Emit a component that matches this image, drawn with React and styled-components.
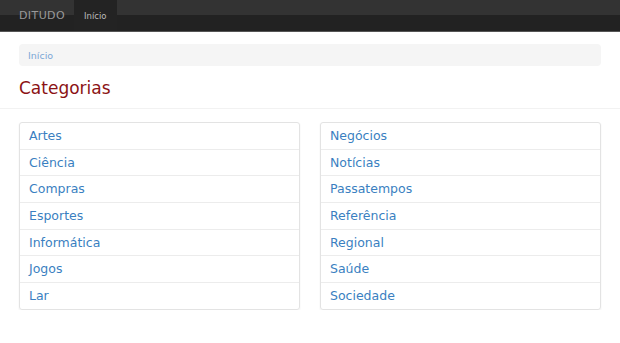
import React from "react";
import styled, { createGlobalStyle } from "styled-components";

const GlobalStyle = createGlobalStyle`
  body {
    margin: 0;
    background: #fff;
    font-family: "DejaVu Sans", Verdana, sans-serif;
  }
  * { box-sizing: border-box; }
`;

const left = ["Artes", "Ciência", "Compras", "Esportes", "Informática", "Jogos", "Lar"];
const right = ["Negócios", "Notícias", "Passatempos", "Referência", "Regional", "Saúde", "Sociedade"];

const Navbar = styled.div`
  height: 32px;
  display: flex;
  align-items: stretch;
  padding: 0 19px;
  background: linear-gradient(to bottom, #333 0%, #333 48%, #222 48%, #222 100%);
  border-bottom: 1px solid #555;
`;

const Brand = styled.div`
  display: flex;
  align-items: center;
  padding-right: 9px;
  color: #999;
  font-size: 11px;
  letter-spacing: 0.4px;
`;

const Tab = styled.div`
  display: flex;
  align-items: center;
  padding: 0 10px;
  background: ${(p) => (p.$active ? "#232323" : "transparent")};
  color: #bbb;
  font-size: 8.5px;
`;

const Container = styled.div`
  padding: 12px 19px 0;
`;

const Breadcrumb = styled.div`
  height: 22px;
  display: flex;
  align-items: center;
  padding: 0 9px;
  background: #f5f5f5;
  border-radius: 4px;
  font-size: 9.5px;
  color: #7ba7d6;
`;

const Title = styled.h1`
  margin: 10px 0 0;
  font-weight: normal;
  font-size: 17px;
  line-height: 24px;
  color: #8b1214;
`;

const Rule = styled.hr`
  margin: 8px 0 0;
  border: 0;
  border-top: 1px solid #f2f2f2;
`;

const Columns = styled.div`
  display: grid;
  grid-template-columns: 1fr 1fr;
  gap: 20px;
  padding: 13px 19px 0;
`;

const List = styled.ul`
  list-style: none;
  margin: 0;
  padding: 0;
  border: 1px solid #e3e3e3;
  border-radius: 3px;
  box-shadow: 0 1px 2px rgba(0, 0, 0, 0.07);
`;

const Item = styled.li`
  padding: 5px 9px;
  line-height: 15.67px;
  font-size: 12.5px;
  color: #3a7fc1;
  & + & {
    border-top: 1px solid #ececec;
  }
`;

export default function App() {
  return (
    <>
      <GlobalStyle />
      <Navbar>
        <Brand>DITUDO</Brand>
        <Tab $active>Início</Tab>
      </Navbar>
      <Container>
        <Breadcrumb>Início</Breadcrumb>
        <Title>Categorias</Title>
      </Container>
      <Rule />
      <Columns>
        <List>
          {left.map((c) => (
            <Item key={c}>{c}</Item>
          ))}
        </List>
        <List>
          {right.map((c) => (
            <Item key={c}>{c}</Item>
          ))}
        </List>
      </Columns>
    </>
  );
}
